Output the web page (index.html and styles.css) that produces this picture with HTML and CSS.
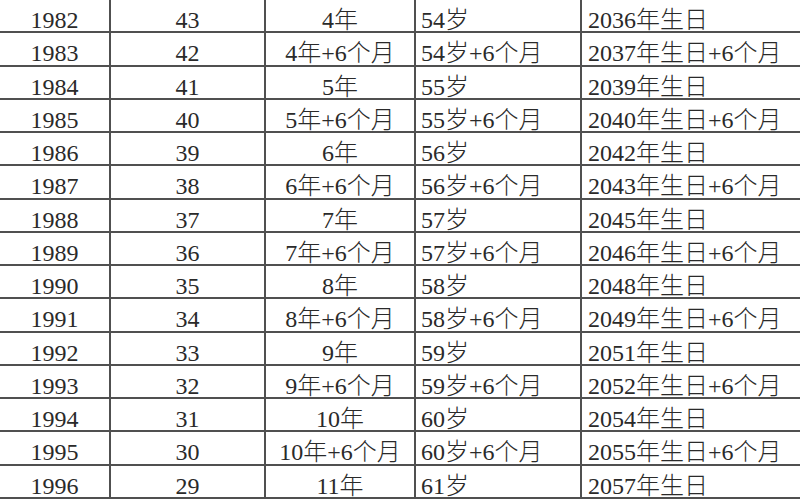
FILE: index.html
```html
<!DOCTYPE html>
<html lang="zh-CN">
<head>
<meta charset="utf-8">
<title>退休年龄对照表</title>
<link rel="stylesheet" href="styles.css">
</head>
<body>
<div class="sheet">
  <div class="c c1">1982</div><div class="c c2">43</div><div class="c c3">4年</div><div class="c c4">54岁</div><div class="c c5">2036年生日</div>
  <div class="c c1">1983</div><div class="c c2">42</div><div class="c c3">4年+6个月</div><div class="c c4">54岁+6个月</div><div class="c c5">2037年生日+6个月</div>
  <div class="c c1">1984</div><div class="c c2">41</div><div class="c c3">5年</div><div class="c c4">55岁</div><div class="c c5">2039年生日</div>
  <div class="c c1">1985</div><div class="c c2">40</div><div class="c c3">5年+6个月</div><div class="c c4">55岁+6个月</div><div class="c c5">2040年生日+6个月</div>
  <div class="c c1">1986</div><div class="c c2">39</div><div class="c c3">6年</div><div class="c c4">56岁</div><div class="c c5">2042年生日</div>
  <div class="c c1">1987</div><div class="c c2">38</div><div class="c c3">6年+6个月</div><div class="c c4">56岁+6个月</div><div class="c c5">2043年生日+6个月</div>
  <div class="c c1">1988</div><div class="c c2">37</div><div class="c c3">7年</div><div class="c c4">57岁</div><div class="c c5">2045年生日</div>
  <div class="c c1">1989</div><div class="c c2">36</div><div class="c c3">7年+6个月</div><div class="c c4">57岁+6个月</div><div class="c c5">2046年生日+6个月</div>
  <div class="c c1">1990</div><div class="c c2">35</div><div class="c c3">8年</div><div class="c c4">58岁</div><div class="c c5">2048年生日</div>
  <div class="c c1">1991</div><div class="c c2">34</div><div class="c c3">8年+6个月</div><div class="c c4">58岁+6个月</div><div class="c c5">2049年生日+6个月</div>
  <div class="c c1">1992</div><div class="c c2">33</div><div class="c c3">9年</div><div class="c c4">59岁</div><div class="c c5">2051年生日</div>
  <div class="c c1">1993</div><div class="c c2">32</div><div class="c c3">9年+6个月</div><div class="c c4">59岁+6个月</div><div class="c c5">2052年生日+6个月</div>
  <div class="c c1">1994</div><div class="c c2">31</div><div class="c c3">10年</div><div class="c c4">60岁</div><div class="c c5">2054年生日</div>
  <div class="c c1">1995</div><div class="c c2">30</div><div class="c c3">10年+6个月</div><div class="c c4">60岁+6个月</div><div class="c c5">2055年生日+6个月</div>
  <div class="c c1">1996</div><div class="c c2">29</div><div class="c c3">11年</div><div class="c c4">61岁</div><div class="c c5">2057年生日</div>
</div>
</body>
</html>
```

FILE: styles.css
```css
html, body {
  margin: 0;
  padding: 0;
  background: #ffffff;
  overflow: hidden;
}

.sheet {
  width: 830px;
  display: grid;
  grid-template-columns: 111px 155px 150px 166px 1fr;
  grid-auto-rows: 33.25px;
  border-top: 1px solid #555555;
  margin-top: -1px;
  font-family: "Liberation Serif", "Noto Sans CJK SC", serif;
  font-size: 24px;
  font-weight: 300;
  color: #2a2a2a;
}

.c {
  box-sizing: border-box;
  border-right: 2px solid #505050;
  border-bottom: 2px solid #505050;
  line-height: 24px;
  padding-top: 8px;
  white-space: nowrap;
  overflow: hidden;
}

.c1, .c2, .c3 {
  text-align: center;
}

.c4 {
  padding-left: 5px;
}

.c5 {
  padding-left: 6px;
  border-right: none;
}
```
